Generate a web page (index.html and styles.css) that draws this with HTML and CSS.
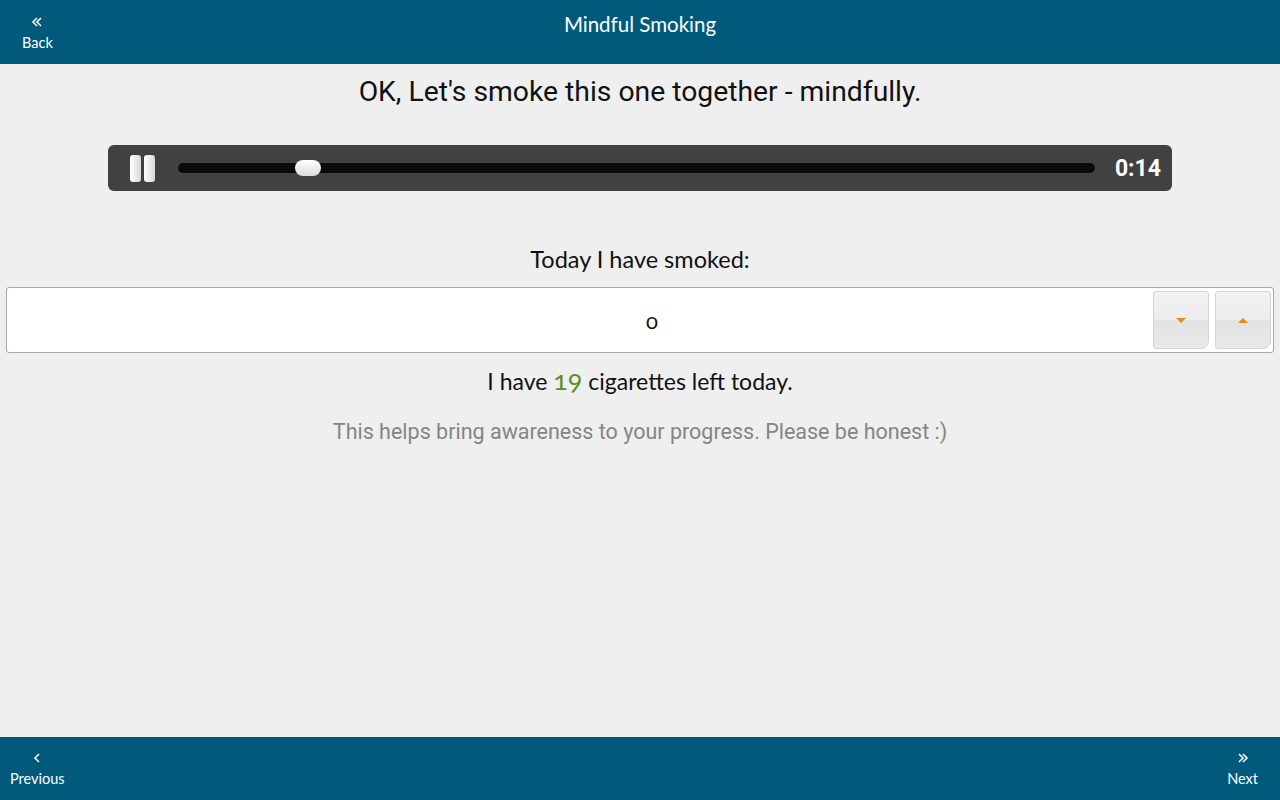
FILE: index.html
```html
<!DOCTYPE html>
<html lang="en">
<head>
  <meta charset="UTF-8">
  <title>Mindful Smoking</title>
  <link rel="stylesheet" href="styles.css">
</head>
<body>

  <!-- header -->
  <div class="topbar">
    <button class="nav-button back">
      <svg class="nav-icon" width="12" height="12" viewBox="0 0 12 12"><path d="M6 2 L2 6 L6 10 M10 2 L6 6 L10 10" fill="none" stroke="#fff" stroke-width="1.6"/></svg>
      <span>Back</span>
    </button>
    <div class="title">Mindful Smoking</div>
  </div>

  <div class="content">
    <h1 class="headline">OK, Let's smoke this one together - mindfully.</h1>

    <!-- audio player -->
    <div class="player">
      <div class="pause">
        <span class="pause-bar"></span>
        <span class="pause-bar"></span>
      </div>
      <div class="track">
        <div class="thumb" style="left: 117px"></div>
      </div>
      <div class="time">0:14</div>
    </div>

    <p class="label">Today I have smoked:</p>

    <!-- spinner -->
    <div class="spinner">
      <div class="spinner-value">0</div>
      <button class="spin-button"><span class="arrow down"></span></button>
      <button class="spin-button"><span class="arrow up"></span></button>
    </div>

    <p class="label left">I have <span class="count">19</span> cigarettes left today.</p>

    <p class="hint">This helps bring awareness to your progress. Please be honest :)</p>
  </div>

  <!-- footer -->
  <div class="bottombar">
    <button class="nav-button">
      <svg class="nav-icon" width="12" height="12" viewBox="0 0 12 12"><path d="M8 2 L4 6 L8 10" fill="none" stroke="#fff" stroke-width="1.6"/></svg>
      <span>Previous</span>
    </button>
    <button class="nav-button next">
      <svg class="nav-icon" width="12" height="12" viewBox="0 0 12 12"><path d="M2 2 L6 6 L2 10 M6 2 L10 6 L6 10" fill="none" stroke="#fff" stroke-width="1.6"/></svg>
      <span>Next</span>
    </button>
  </div>

</body>
</html>
```

FILE: styles.css
```css
body {
  margin: 0;
  height: 800px;
  background: #efefef;
  font-family: Lato, "Open Sans", sans-serif;
  font-feature-settings: "onum";
  color: #111;
  display: flex;
  flex-direction: column;
  overflow: hidden;
}

.topbar,
.bottombar {
  background-color: #015a7b;
  color: #fff;
}

.topbar {
  height: 64px;
  position: relative;
  display: flex;
  align-items: flex-start;
}

.title {
  position: absolute;
  left: 0;
  right: 0;
  top: 12px;
  text-align: center;
  font-size: 20.5px;
  pointer-events: none;
}

.nav-button {
  background: none;
  border: none;
  color: #fff;
  font-family: Lato, "Open Sans", sans-serif;
  font-size: 14.5px;
  display: flex;
  flex-direction: column;
  align-items: center;
  padding: 16px 10px 0;
  line-height: 18px;
  gap: 6px;
  cursor: pointer;
}

.nav-button.back {
  padding-left: 22px;
}

.nav-button.next {
  padding-right: 22px;
}

.nav-icon {
  display: block;
}

.content {
  flex: 1;
  display: flex;
  flex-direction: column;
  align-items: center;
  padding: 0 6px;
}

.headline {
  font-family: Roboto, sans-serif;
  font-feature-settings: normal;
  font-weight: normal;
  font-size: 28.3px;
  margin: 12px 0 0;
  line-height: 32px;
}

.player {
  margin-top: 37px;
  width: 1064px;
  height: 46px;
  background-color: #414141;
  border-radius: 6px;
  display: flex;
  align-items: center;
  padding: 0 11px 0 22px;
  box-sizing: border-box;
  gap: 23px;
}

.pause {
  display: flex;
  gap: 3px;
}

.pause-bar {
  width: 11px;
  height: 27px;
  border-radius: 3px;
  background: linear-gradient(to right, #fff, #d8d8d8);
}

.track {
  flex: 1;
  height: 10px;
  background-color: #0a0a0a;
  border-radius: 5px;
  position: relative;
}

.thumb {
  position: absolute;
  top: -3px;
  width: 26px;
  height: 16px;
  border-radius: 8px;
  background: linear-gradient(#fff, #dcdcdc);
}

.time {
  font-family: Roboto, sans-serif;
  font-feature-settings: normal;
  font-weight: bold;
  font-size: 23px;
  color: #fff;
  margin-left: -3px;
}

.label {
  font-size: 23.5px;
  margin: 53px 0 0;
  line-height: 30px;
}

.label.left {
  font-size: 23px;
  margin-top: 12px;
}

.spinner {
  margin-top: 13px;
  align-self: stretch;
  height: 66px;
  background: #fff;
  border: 1px solid #aaa;
  border-radius: 3px;
  box-sizing: border-box;
  display: flex;
  align-items: center;
  padding: 0 2px 0 0;
  gap: 6px;
}

.spinner-value {
  flex: 1;
  text-align: center;
  font-size: 22px;
  padding-left: 150px;
}

.spin-button {
  width: 56px;
  height: 58px;
  border: 1px solid #d4d4d4;
  border-radius: 3px 3px 8px 3px;
  background: linear-gradient(#f3f3f3 0%, #ececec 50%, #e2e2e2 51%, #eaeaea 100%);
  display: flex;
  align-items: center;
  justify-content: center;
  padding: 0;
}

.arrow {
  width: 0;
  height: 0;
  border-left: 5px solid transparent;
  border-right: 5px solid transparent;
}

.arrow.down {
  border-top: 5px solid #f08a12;
}

.arrow.up {
  border-bottom: 5px solid #f08a12;
}

.count {
  color: #5f8f1c;
  font-size: 27px;
}

.hint {
  font-family: Roboto, sans-serif;
  font-feature-settings: normal;
  font-size: 21.5px;
  color: #858585;
  margin: 23px 0 0;
}

.bottombar {
  height: 63px;
  display: flex;
  justify-content: space-between;
  align-items: flex-start;
}

.bottombar .nav-button {
  padding-top: 15px;
}
```
